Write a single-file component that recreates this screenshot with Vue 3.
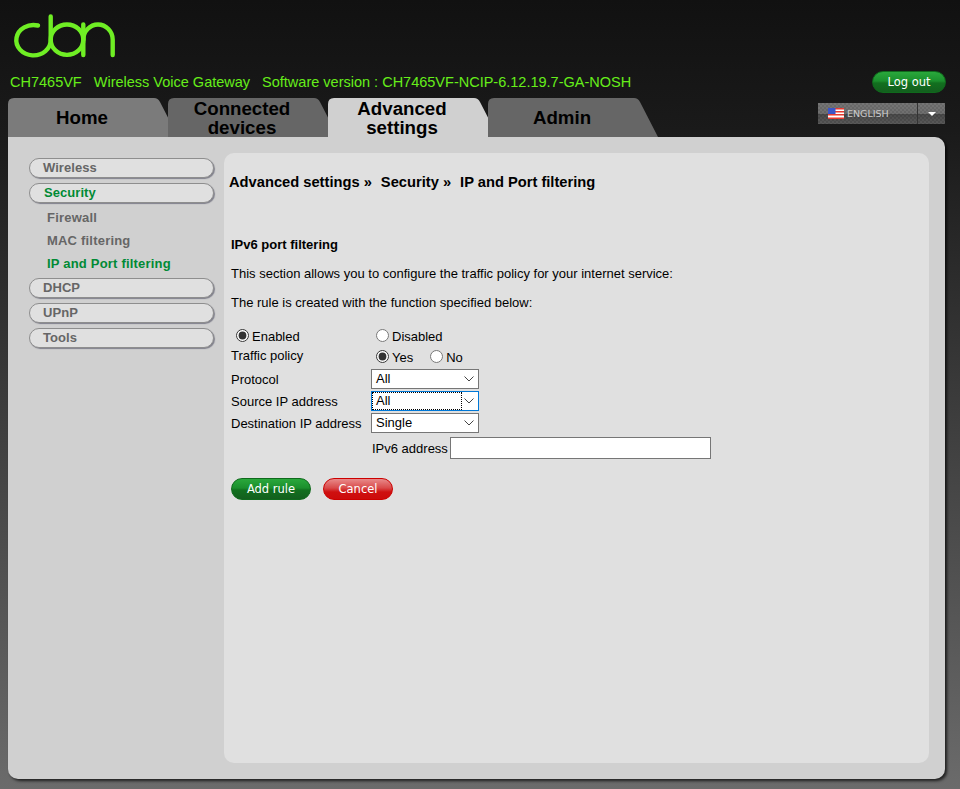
<script setup>
const tabs = [
  { label: ['Home'], cls: 'tab-home' },
  { label: ['Connected', 'devices'], cls: 'tab-dark' },
  { label: ['Advanced', 'settings'], cls: 'tab-active' },
  { label: ['Admin'], cls: 'tab-dark' }
]
</script>

<template>
  <div class="page">
    <header class="top">
      <svg class="logo" width="120" height="64" viewBox="0 0 120 64" fill="none" stroke="#6fee24" stroke-width="4.4" stroke-linecap="round">
        <path d="M38 25.500 A17.200 15.200 0 1 0 50.700 39.700 V16.500" />
        <ellipse cx="67" cy="39.700" rx="16.300" ry="15.200" />
        <path d="M83.300 55 V24.500" />
        <path d="M83.300 39.700 A14.700 15.200 0 0 1 112.700 39.700 V55" />
      </svg>
    </header>

    <div class="status">
      <span>CH7465VF</span><span>Wireless Voice Gateway</span><span>Software version : CH7465VF-NCIP-6.12.19.7-GA-NOSH</span>
      <button class="logout">Log out</button>
    </div>

    <div class="tabrow">
      <nav class="tabs">
        <a v-for="t in tabs" :key="t.label[0]" class="tab" :class="t.cls">
          <svg class="tabshape" width="170" height="39" viewBox="0 0 170 39"><path d="M0 39 V6 Q0 0 6 0 H146 Q150 0 152 4 L170 39 Z" /></svg>
          <span class="tablabel"><span v-for="l in t.label" :key="l">{{ l }}</span></span>
        </a>
      </nav>
      <div class="lang">
        <div class="lang-main">
          <svg width="16" height="11" viewBox="0 0 16 11"><rect width="16" height="11" fill="#fff"/><g fill="#e8392f"><rect width="16" height="1.500"/><rect y="3" width="16" height="1.500"/><rect y="6" width="16" height="1.500"/><rect y="9.500" width="16" height="1.500"/></g><rect width="7.500" height="6" fill="#3a55c8"/></svg>
          <span>ENGLISH</span>
        </div>
        <div class="lang-caret"><i></i></div>
      </div>
    </div>

    <main class="panel">
      <aside class="side">
        <a class="pill">Wireless</a>
        <a class="pill on">Security</a>
        <a class="sub">Firewall</a>
        <a class="sub">MAC filtering</a>
        <a class="sub on">IP and Port filtering</a>
        <a class="pill">DHCP</a>
        <a class="pill">UPnP</a>
        <a class="pill">Tools</a>
      </aside>
      <section class="content">
        <h1 class="crumb"><span>Advanced settings »</span><span>Security »</span><span>IP and Port filtering</span></h1>
        <div class="body">
          <h2>IPv6 port filtering</h2>
          <p>This section allows you to configure the traffic policy for your internet service:</p>
          <p>The rule is created with the function specified below:</p>

          <form class="form" @submit.prevent>
            <div class="row r-en">
              <label class="c1 indent"><input type="radio" name="en" checked><span>Enabled</span></label>
              <label class="c2"><input type="radio" name="en"><span>Disabled</span></label>
            </div>
            <div class="row r-tp">
              <div class="c1 tp-label">Traffic policy</div>
              <div class="c2 pair">
                <label><input type="radio" name="tp" checked><span>Yes</span></label>
                <label><input type="radio" name="tp"><span>No</span></label>
              </div>
            </div>
            <div class="row r-sel">
              <div class="c1">Protocol</div>
              <div class="sel"><span>All</span><svg width="10" height="6" viewBox="0 0 10 6"><path d="M.5 .5 5 5 9.500 .5" fill="none" stroke="#444" /></svg></div>
            </div>
            <div class="row r-sel">
              <div class="c1">Source IP address</div>
              <div class="sel focus"><span>All</span><svg width="10" height="6" viewBox="0 0 10 6"><path d="M.5 .5 5 5 9.500 .5" fill="none" stroke="#444" /></svg></div>
            </div>
            <div class="row r-sel">
              <div class="c1">Destination IP address</div>
              <div class="sel"><span>Single</span><svg width="10" height="6" viewBox="0 0 10 6"><path d="M.5 .5 5 5 9.500 .5" fill="none" stroke="#444" /></svg></div>
            </div>
            <div class="row r-ip">
              <label class="ip">IPv6 address<input type="text"></label>
            </div>
            <div class="btns">
              <button class="btn green">Add rule</button>
              <button class="btn red">Cancel</button>
            </div>
          </form>
        </div>
      </section>
    </main>
  </div>
</template>

<style>
html, body { margin: 0; background: #6b6b6b; }
</style>

<style scoped>
.page {
  width: 960px;
  height: 789px;
  overflow: hidden;
  background: linear-gradient(#111 0, #1a1a1a 130px, #6b6b6b 789px);
  font-family: "Liberation Sans", Arial, sans-serif;
  color: #000;
  box-sizing: border-box;
}
.top { height: 71px; }
.logo { display: block; }
.status {
  height: 27px;
  display: flex;
  align-items: flex-start;
  padding-left: 10px;
  gap: 12px;
  color: #66ee1a;
  font-size: 14.500px;
  line-height: 22px;
  position: relative;
}
.logout {
  position: absolute;
  left: 872px;
  top: 0;
  width: 74px;
  height: 22px;
  padding: 0;
  border: 1px solid #0f6a1c;
  border-radius: 11px;
  background: linear-gradient(#2aa83c 0, #1b8f2d 45%, #12701f 55%, #135f1e 100%);
  color: #fff;
  font: 11.500px/21px "DejaVu Sans", sans-serif;
}
.tabrow { display: flex; height: 39px; }
.tabs { display: flex; margin-left: 8px; width: 809px; }
.tab {
  position: relative;
  width: 170px;
  height: 39px;
  margin-right: -10px;
  flex: none;
  font-weight: bold;
  font-size: 18.700px;
  line-height: 19px;
  text-align: center;
}
.tabshape { position: absolute; left: 0; top: 0; }
.tab-home .tabshape path { fill: #7b7b7b; }
.tab-dark .tabshape path { fill: #666; }
.tab-active .tabshape path { fill: #d0d0d0; }
.tablabel {
  position: relative;
  display: flex;
  flex-direction: column;
  justify-content: center;
  height: 39px;
  width: 148px;
}
.lang {
  display: flex;
  margin: 5px 0 0 1px;
  width: 127px;
  height: 21px;
  background-color: #555;
  background-image:
    linear-gradient(rgba(255, 255, 255, .1) 0, rgba(255, 255, 255, .06) 50%, rgba(0, 0, 0, .28) 52%, rgba(0, 0, 0, .12) 100%),
    repeating-conic-gradient(#5a5a5a 0 25%, #666 0 50%);
  background-size: 100% 100%, 4px 4px;
  color: #ccc;
  font: 9.500px/21px "DejaVu Sans", sans-serif;
}
.lang-main {
  width: 100px;
  display: flex;
  align-items: center;
  gap: 3px;
  padding-left: 10px;
  box-sizing: border-box;
  border-right: 1px solid #333;
}
.lang-caret { flex: 1; display: flex; align-items: center; justify-content: center; }
.lang-caret i {
  width: 0; height: 0;
  border-left: 4px solid transparent;
  border-right: 4px solid transparent;
  border-top: 4px solid #fff;
}
.panel {
  width: 937px;
  height: 642px;
  margin-left: 8px;
  background: #d0d0d0;
  border-radius: 0 10px 10px 10px;
  box-shadow: 2px 2px 3px rgba(0, 0, 0, .7);
  display: flex;
  box-sizing: border-box;
  padding: 16px 16px 16px 21px;
}
.side { width: 195px; flex: none; padding-top: 5px; }
.pill {
  display: block;
  box-sizing: border-box;
  width: 185px;
  height: 20px;
  margin-bottom: 5px;
  border: 1px solid #8e8e8e;
  box-shadow: 1px 1px 1px #80808c;
  border-radius: 10px;
  background: #e0e0e0;
  color: #666;
  font-weight: bold;
  font-size: 13px;
  line-height: 18px;
  padding-left: 13px;
  letter-spacing: .05px;
}
.pill.on { color: #008a35; padding-left: 14px; margin-bottom: 3px; }
.sub {
  display: block;
  height: 23px;
  line-height: 23px;
  padding-left: 18px;
  color: #666;
  font-weight: bold;
  font-size: 13px;
  letter-spacing: .2px;
}
.sub.on { color: #008a35; margin-bottom: 3px; }
.content {
  width: 705px;
  height: 610px;
  flex: none;
  background: #e0e0e0;
  border-radius: 10px;
  box-sizing: border-box;
  padding: 0 5px;
}
.crumb {
  margin: 20px 0 0;
  display: flex;
  gap: 9px;
  font-size: 14.700px;
  line-height: 18px;
  font-weight: bold;
}
.body { padding: 46px 0 0 2px; font-size: 13px; }
h2 { margin: 0; font-size: 13px; line-height: 16px; font-weight: bold; }
p { margin: 13px 0 0; line-height: 16px; }
.form { margin-top: 15px; }
.row { display: flex; align-items: center; }
.c1 { width: 140px; flex: none; }
.c2 { margin-left: 5px; }
.tp-label { position: relative; top: -2px; }
.indent { padding-left: 5px; box-sizing: border-box; }
label { display: flex; align-items: center; }
input[type=radio] { margin: -2px 3px 0 0; width: 13px; height: 13px; accent-color: #333; }
.r-en { height: 20px; }
.r-tp { height: 22px; }
.pair { display: flex; gap: 17px; }
.r-sel { height: 22px; }
.sel {
  box-sizing: border-box;
  width: 108px;
  height: 20px;
  border: 1px solid #767676;
  background: #fff;
  position: relative;
  padding-left: 4px;
  line-height: 18px;
}
.sel svg { position: absolute; right: 4px; top: 6px; }
.sel.focus { border-color: #0078d7; }
.sel.focus::before {
  content: "";
  position: absolute;
  left: 0; top: 0; bottom: 0;
  width: 88px;
  border: 1px dotted #000;
}
.r-ip { height: 28px; padding-left: 141px; }
.ip { gap: 1px; }
.ip input {
  width: 261px;
  height: 22px;
  box-sizing: border-box;
  border: 1px solid #767676;
  background: #fff;
  padding: 0;
  margin-left: 1px;
}
.btns { display: flex; gap: 12px; margin-top: 16px; }
.btn {
  height: 22px;
  padding: 0;
  border-radius: 11px;
  color: #fff;
  font: 11.500px/20px "DejaVu Sans", sans-serif;
}
.green { width: 80px; border: 1px solid #0f6a1c; background: linear-gradient(#2aa83c 0, #1b8f2d 45%, #12701f 55%, #135f1e 100%); }
.red { width: 70px; border: 1px solid #c00; background: linear-gradient(#e88a8a 0, #d94a4a 45%, #cf1010 65%, #cc0b0b 100%); }
</style>
